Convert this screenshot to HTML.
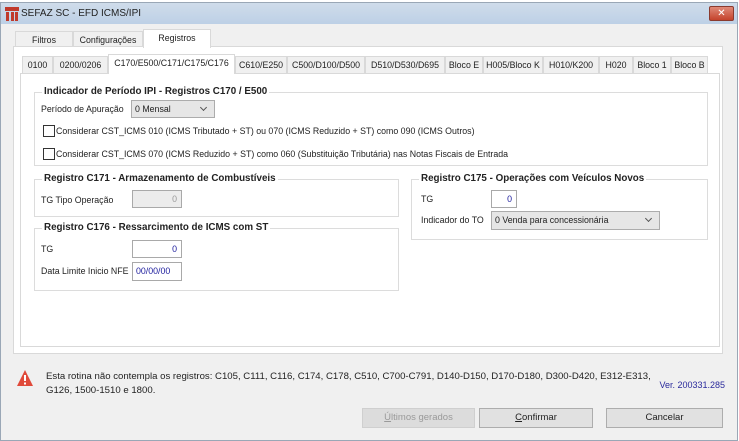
<!DOCTYPE html><html><head><meta charset="utf-8"><style>
*{box-sizing:border-box}body{margin:0;width:739px;height:441px;overflow:hidden;background:#fff;font-family:"Liberation Sans","DejaVu Sans",sans-serif;font-size:8.8px;color:#222}
.a{position:absolute;white-space:nowrap}
.win{position:absolute;left:0;top:2px;width:738px;height:439px;background:#f0f0f0;border:1px solid #9aa7b6}
.title{position:absolute;left:0;top:0;width:100%;height:21px;background:linear-gradient(#cfdcea,#bdd0e6)}
.tab{position:absolute;border:1px solid #d9d9d9;border-bottom:none;background:#f0f0f0;text-align:center;line-height:16px;white-space:nowrap;overflow:hidden}
.sel{background:#fff;z-index:2}
.grp{position:absolute;border:1px solid #dcdcdc}
.gt{position:absolute;top:-7px;left:7px;background:#fff;padding:0 2px;font-weight:bold;font-size:9.8px;white-space:nowrap}
.inp{position:absolute;border:1px solid #a9a9a9;background:#fff;text-align:right;padding-right:4px;line-height:16px;color:#1a1a9c}
.cb{position:absolute;width:12px;height:12px;border:1px solid #333;background:#fff}
.combo{position:absolute;border:1px solid #acacac;background:#e6e6e6;line-height:16px;padding-left:3px;white-space:nowrap}
.combo:after{content:"";position:absolute;right:8px;top:4px;width:4px;height:4px;border-right:1px solid #555;border-bottom:1px solid #555;transform:rotate(45deg)}
.btn{position:absolute;border:1px solid #adadad;background:#e1e1e1;text-align:center;line-height:17px;font-size:9.5px}
</style></head><body>
<div class="win">
<div class="title"></div>
<svg class="a" style="left:4px;top:4px" width="14" height="14"><rect x="0" y="0" width="14" height="4" fill="#c0392b"/><rect x="1" y="5" width="3" height="9" fill="#c0392b"/><rect x="6" y="5" width="3" height="9" fill="#c0392b"/><rect x="10" y="5" width="3" height="9" fill="#c0392b"/></svg>
<div class="a" style="left:20px;top:5px;font-size:10px">SEFAZ SC - EFD ICMS/IPI</div>
<div class="a" style="left:708px;top:3px;width:25px;height:15px;background:linear-gradient(#e08a78,#c4432c);border:1px solid #8a3a2e;border-radius:2px;color:#fff;text-align:center;font-size:10px;line-height:13px;font-weight:bold">✕</div>
<div class="tab" style="left:14px;top:28px;width:58px;height:16px">Filtros</div>
<div class="tab" style="left:72px;top:28px;width:70px;height:16px">Configurações</div>
<div class="tab sel" style="left:142px;top:26px;width:68px;height:19px;line-height:16px">Registros</div>
<div class="a" style="left:12px;top:43px;width:710px;height:308px;background:#fff;border:1px solid #d9d9d9"></div>
<div class="tab" style="left:21px;top:53px;width:31px;height:17px;z-index:3">0100</div>
<div class="tab" style="left:52px;top:53px;width:55px;height:17px;z-index:3">0200/0206</div>
<div class="tab sel" style="left:107px;top:51px;width:127px;height:20px;z-index:4;background:#fff">C170/E500/C171/C175/C176</div>
<div class="tab" style="left:234px;top:53px;width:52px;height:17px;z-index:3">C610/E250</div>
<div class="tab" style="left:286px;top:53px;width:78px;height:17px;z-index:3">C500/D100/D500</div>
<div class="tab" style="left:364px;top:53px;width:80px;height:17px;z-index:3">D510/D530/D695</div>
<div class="tab" style="left:444px;top:53px;width:38px;height:17px;z-index:3">Bloco E</div>
<div class="tab" style="left:482px;top:53px;width:60px;height:17px;z-index:3">H005/Bloco K</div>
<div class="tab" style="left:542px;top:53px;width:56px;height:17px;z-index:3">H010/K200</div>
<div class="tab" style="left:598px;top:53px;width:34px;height:17px;z-index:3">H020</div>
<div class="tab" style="left:632px;top:53px;width:38px;height:17px;z-index:3">Bloco 1</div>
<div class="tab" style="left:670px;top:53px;width:37px;height:17px;z-index:3">Bloco B</div>
<div class="a" style="left:19px;top:70px;width:700px;height:274px;background:#fff;border:1px solid #d9d9d9;z-index:2"></div>
<div class="a" style="left:0;top:0;z-index:5">
<div class="grp" style="left:33px;top:89px;width:674px;height:74px"><div class="gt">Indicador de Período IPI - Registros C170 / E500</div></div>
<div class="a" style="left:40px;top:101px">Período de Apuração</div>
<div class="combo" style="left:130px;top:97px;width:84px;height:18px">0 Mensal</div>
<div class="cb" style="left:42px;top:122px"></div><div class="a" style="left:55px;top:123px">Considerar CST_ICMS 010 (ICMS Tributado + ST) ou 070 (ICMS Reduzido + ST) como 090 (ICMS Outros)</div>
<div class="cb" style="left:42px;top:145px"></div><div class="a" style="left:55px;top:146px">Considerar CST_ICMS 070 (ICMS Reduzido + ST) como 060 (Substituição Tributária) nas Notas Fiscais de Entrada</div>
<div class="grp" style="left:33px;top:176px;width:365px;height:38px"><div class="gt">Registro C171 - Armazenamento de Combustíveis</div></div>
<div class="a" style="left:40px;top:192px">TG Tipo Operação</div>
<div class="inp" style="left:131px;top:187px;width:50px;height:18px;background:#ececec;color:#999">0</div>
<div class="grp" style="left:33px;top:225px;width:365px;height:63px"><div class="gt">Registro C176 - Ressarcimento de ICMS com ST</div></div>
<div class="a" style="left:40px;top:241px">TG</div>
<div class="inp" style="left:131px;top:237px;width:50px;height:18px">0</div>
<div class="a" style="left:40px;top:263px">Data Limite Inicio NFE</div>
<div class="inp" style="left:131px;top:259px;width:50px;height:19px;text-align:left;padding-left:3px">00/00/00</div>
<div class="grp" style="left:410px;top:176px;width:297px;height:61px"><div class="gt">Registro C175 - Operações com Veículos Novos</div></div>
<div class="a" style="left:420px;top:191px">TG</div>
<div class="inp" style="left:490px;top:187px;width:26px;height:18px">0</div>
<div class="a" style="left:420px;top:212px">Indicador do TO</div>
<div class="combo" style="left:490px;top:208px;width:169px;height:19px">0 Venda para concessionária</div>
</div>
<svg class="a" style="left:15px;top:366px" width="18" height="18"><path d="M9 1 L17 17 H1 Z" fill="#e04a3a"/><rect x="8" y="6" width="2" height="6" fill="#fff"/><rect x="8" y="13.5" width="2" height="2" fill="#fff"/></svg>
<div class="a" style="left:45px;top:367px;line-height:14px;font-size:9.6px">Esta rotina não contempla os registros: C105, C111, C116, C174, C178, C510, C700-C791, D140-D150, D170-D180, D300-D420, E312-E313,<br>G126, 1500-1510 e 1800.</div>
<div class="a" style="right:12px;top:377px;color:#2a2a9c;font-size:9px">Ver. 200331.285</div>
<div class="btn" style="left:361px;top:405px;width:113px;height:20px;color:#9a9a9a;background:#dcdcdc;border-color:#cfcfcf"><u>Ú</u>ltimos gerados</div>
<div class="btn" style="left:478px;top:405px;width:114px;height:20px"><u>C</u>onfirmar</div>
<div class="btn" style="left:605px;top:405px;width:117px;height:20px">Cancelar</div>
</div>
</body></html>
